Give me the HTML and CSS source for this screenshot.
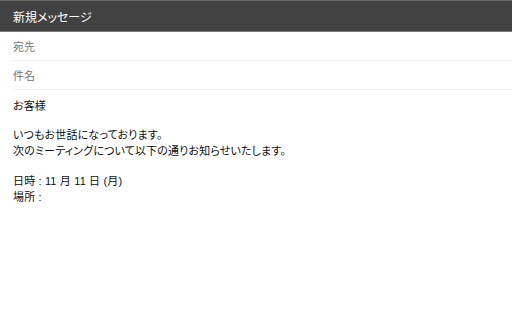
FILE: index.html
```html
<!DOCTYPE html>
<html lang="ja">
<head>
  <meta charset="UTF-8">
  <meta name="viewport" content="width=device-width, initial-scale=1.0">
  <title>新規メッセージ</title>
  <link rel="stylesheet" href="styles.css">
</head>
<body>
  <header class="title-bar">
    <h1>新規メッセージ</h1>
  </header>
  <div class="compose">
    <div class="field">宛先</div>
    <div class="field">件名</div>
    <div class="message">
      <p class="greeting">お客様</p>
      <p>いつもお世話になっております。<br>次のミーティングについて以下の通りお知らせいたします。</p>
      <p>日時 : 11 月 11 日 (月)<br>場所 :</p>
    </div>
  </div>
</body>
</html>
```

FILE: styles.css
```css
body {
  margin: 0;
  font-family: "Liberation Sans", "Noto Sans CJK JP", sans-serif;
  background: white;
  color: #111;
}
.title-bar {
  background: #424242;
  border-top: 1px solid #6a6a6a;
  border-bottom: 1px solid #7a7a7a;
  height: 30px;
  display: flex;
  align-items: center;
  padding: 0 13px;
}
.title-bar h1 {
  margin: 0;
  font-size: 12px;
  font-weight: normal;
  color: white;
  font-feature-settings: "palt";
}
.compose {
  padding-left: 13px;
}
.field {
  height: 27px;
  padding-top: 1px;
  line-height: 28px;
  font-size: 11px;
  color: #777;
  border-bottom: 1px solid #eee;
}
.message {
  padding-top: 8px;
  font-size: 11px;
  line-height: 16.5px;
  letter-spacing: 0.15px;
  font-feature-settings: "palt";
}
.message p {
  margin: 0 0 13px;
}
.message .greeting {
  margin-bottom: 12px;
}
```
